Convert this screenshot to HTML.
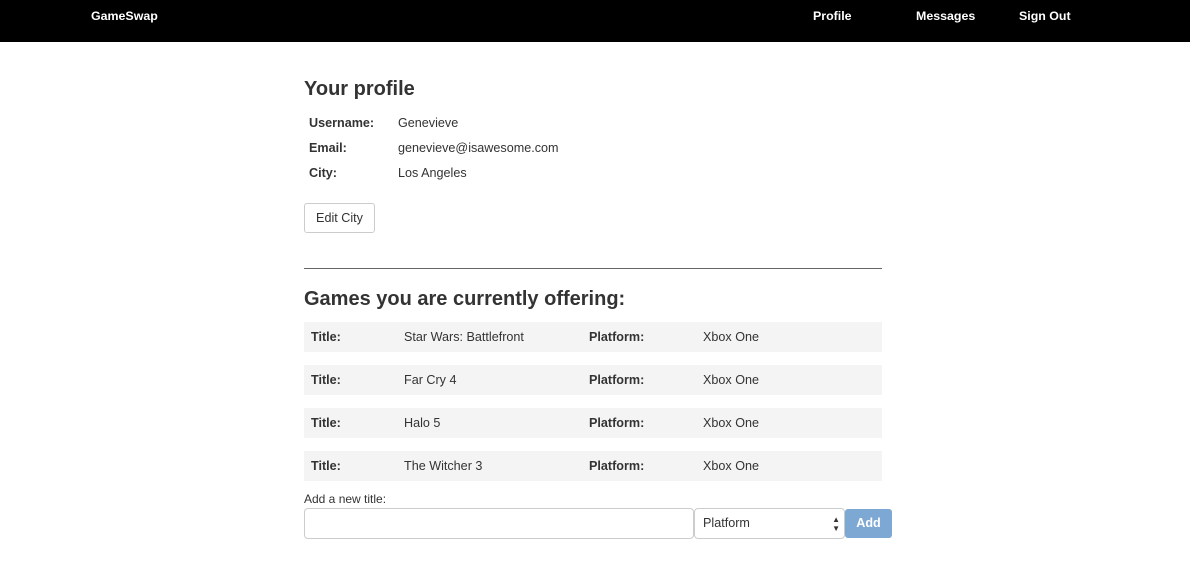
<!DOCTYPE html>
<html><head><meta charset="utf-8"><style>
*{box-sizing:border-box;margin:0;padding:0}
body{width:1190px;height:588px;background:#fff;font-family:"Liberation Sans",Arial,sans-serif;color:#333;font-size:12.6px;position:relative;overflow:hidden}
.nav{position:absolute;left:0;top:0;width:1190px;height:42px;background:#000;color:#fff;font-weight:bold;font-size:12.4px}
.nav span{position:absolute;top:9px}
.abs{position:absolute}
h2{position:absolute;font-weight:bold;font-size:20px;color:#333}
.lbl{font-weight:bold}
.row{position:absolute;left:304px;width:578px;height:30px;background:#f4f4f4}
.row span{position:absolute;top:8px}
</style></head><body>
<div class="nav"><span style="left:91px">GameSwap</span><span style="left:813px">Profile</span><span style="left:916px">Messages</span><span style="left:1019px">Sign Out</span></div>
<h2 style="left:304px;top:78px">Your profile</h2>
<span class="abs lbl" style="left:309px;top:116px">Username:</span><span class="abs" style="left:398px;top:116px">Genevieve</span>
<span class="abs lbl" style="left:309px;top:141px">Email:</span><span class="abs" style="left:398px;top:141px">genevieve@isawesome.com</span>
<span class="abs lbl" style="left:309px;top:166px">City:</span><span class="abs" style="left:398px;top:166px">Los Angeles</span>
<div class="abs" style="left:304px;top:203px;width:71px;height:30px;border:1px solid #ccc;border-radius:3px;text-align:center;line-height:28px">Edit City</div>
<div class="abs" style="left:304px;top:268px;width:578px;height:1px;background:#666"></div>
<h2 style="left:304px;top:288px">Games you are currently offering:</h2>
<div class="row" style="top:322px"><span class="lbl" style="left:7px">Title:</span><span style="left:100px">Star Wars: Battlefront</span><span class="lbl" style="left:285px">Platform:</span><span style="left:399px">Xbox One</span></div>
<div class="row" style="top:365px"><span class="lbl" style="left:7px">Title:</span><span style="left:100px">Far Cry 4</span><span class="lbl" style="left:285px">Platform:</span><span style="left:399px">Xbox One</span></div>
<div class="row" style="top:408px"><span class="lbl" style="left:7px">Title:</span><span style="left:100px">Halo 5</span><span class="lbl" style="left:285px">Platform:</span><span style="left:399px">Xbox One</span></div>
<div class="row" style="top:451px"><span class="lbl" style="left:7px">Title:</span><span style="left:100px">The Witcher 3</span><span class="lbl" style="left:285px">Platform:</span><span style="left:399px">Xbox One</span></div>
<span class="abs" style="left:304px;top:492px;font-size:12px">Add a new title:</span>
<div class="abs" style="left:304px;top:508px;width:390px;height:31px;border:1px solid #ccc;border-radius:4px"></div>
<div class="abs" style="left:694px;top:508px;width:151px;height:31px;border:1px solid #ccc;border-radius:4px;padding-left:8px;line-height:29px">Platform<span class="abs" style="right:4px;top:0;font-size:8px;line-height:9px;padding-top:6px">▲<br>▼</span></div>
<div class="abs" style="left:845px;top:509px;width:47px;height:29px;background:#7ea8d4;border-radius:3px;color:#fff;font-weight:bold;text-align:center;line-height:29px">Add</div>
</body></html>
